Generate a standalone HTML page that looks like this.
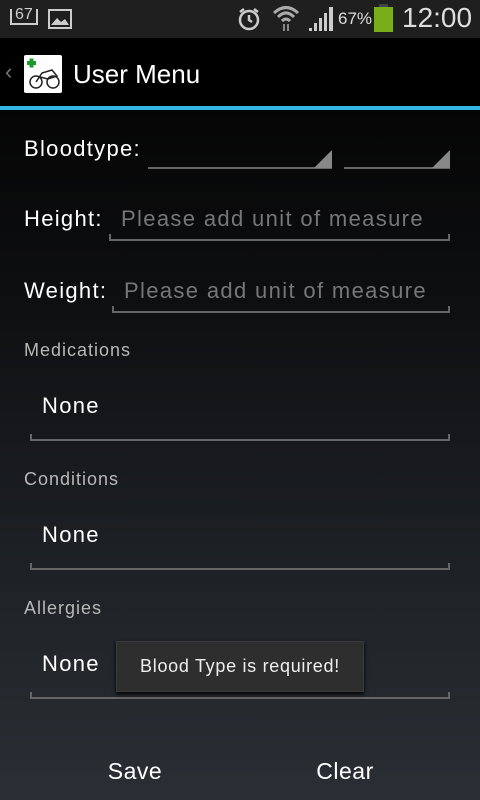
<!DOCTYPE html>
<html><head><style>
*{margin:0;padding:0;box-sizing:border-box}
body{width:480px;height:800px;overflow:hidden;font-family:"Liberation Sans",sans-serif;background:linear-gradient(#050505 110px,#0e0f11 300px,#1d2024 550px,#2b2f35 800px);position:relative;color:#fff}
.a{position:absolute;white-space:nowrap}
.sb{position:absolute;left:0;top:0;width:480px;height:38px;background:#1f1f1f}
.ab{position:absolute;left:0;top:38px;width:480px;height:68px;background:#000}
.bl{position:absolute;left:0;top:106px;width:480px;height:4px;background:#33b5e5}
.lbl{font-size:22px;color:#fff;letter-spacing:1.3px}
.ph{font-size:22px;color:#777;letter-spacing:1.35px}
.sec{font-size:18px;color:#b8b8b8;letter-spacing:1px}
.ln{position:absolute;height:2px;background:#666}
.tk{position:absolute;width:2px;height:6px;background:#666}
.tri{position:absolute;width:0;height:0;border-left:18px solid transparent;border-bottom:18px solid #888}
</style></head><body>
<div class="sb"></div>
<div class="a" style="left:10px;top:9px;font-size:16px;color:#ccc;border:2px solid #ccc;border-top:none;padding:0 3px;height:16px;line-height:12px">67</div>
<div class="a" style="left:48px;top:9px;width:24px;height:20px;border:2px solid #ccc"><svg width="20" height="16"><path d="M1 14 L7 7 L11 11 L15 8 L19 14Z" fill="#ccc"/></svg></div>
<svg class="a" style="left:236px;top:6px" width="26" height="26"><circle cx="13" cy="14" r="9" fill="none" stroke="#ccc" stroke-width="2.5"/><path d="M13 9v5l3 2M4 6l4-3M22 6l-4-3" stroke="#ccc" stroke-width="2.5" fill="none"/></svg>
<svg class="a" style="left:272px;top:4px" width="28" height="28"><path d="M2 9 Q14 -2 26 9" stroke="#aaa" stroke-width="3" fill="none"/><path d="M6 13 Q14 5 22 13" stroke="#aaa" stroke-width="3" fill="none"/><path d="M10 17 Q14 13 18 17" stroke="#aaa" stroke-width="3" fill="none"/><path d="M12 20v7M16 20v7" stroke="#888" stroke-width="2"/></svg>
<svg class="a" style="left:308px;top:6px" width="28" height="26"><path d="M1 25h3v-3h-3zM6 25h3v-8h-3zM11 25h3v-13h-3zM16 25h3v-18h-3zM21 25h4v-24h-4z" fill="#ccc"/></svg>
<div class="a" style="left:338px;top:9px;font-size:17px;color:#ddd">67%</div>
<div class="a" style="left:374px;top:7px;width:19px;height:25px;background:#7aac1b"></div>
<div class="a" style="left:379px;top:4px;width:9px;height:3px;background:#444"></div>
<div class="a" style="left:402px;top:2px;font-size:28px;color:#ddd">12:00</div>
<div class="ab"></div>
<div class="a" style="left:5px;top:59px;font-size:22px;color:#777">‹</div>
<div class="a" style="left:24px;top:55px;width:38px;height:38px;background:#fff;border-radius:2px"><svg width="38" height="38"><path d="M3 8h9M7.5 3.5v9" stroke="#1a9a2a" stroke-width="4"/><circle cx="12" cy="27" r="6" fill="none" stroke="#222" stroke-width="1.5"/><circle cx="29" cy="27" r="6" fill="none" stroke="#222" stroke-width="1.5"/><path d="M12 27 L18 18 L28 15 L33 21 L24 24 L16 22" fill="none" stroke="#222" stroke-width="1.5"/></svg></div>
<div class="a" style="left:73px;top:59px;font-size:26px;color:#fff">User Menu</div>
<div class="bl"></div>

<div class="a lbl" style="left:24px;top:136px">Bloodtype:</div>
<div class="ln" style="left:148px;top:167px;width:184px"></div>
<div class="tri" style="left:314px;top:150px"></div>
<div class="ln" style="left:344px;top:167px;width:106px"></div>
<div class="tri" style="left:432px;top:150px"></div>

<div class="a lbl" style="left:24px;top:206px">Height:</div>
<div class="a ph" style="left:121px;top:206px">Please add unit of measure</div>
<div class="ln" style="left:109px;top:239px;width:341px"></div>
<div class="tk" style="left:109px;top:234px"></div><div class="tk" style="left:448px;top:234px"></div>

<div class="a lbl" style="left:24px;top:278px">Weight:</div>
<div class="a ph" style="left:124px;top:278px">Please add unit of measure</div>
<div class="ln" style="left:112px;top:311px;width:338px"></div>
<div class="tk" style="left:112px;top:306px"></div><div class="tk" style="left:448px;top:306px"></div>

<div class="a sec" style="left:24px;top:340px">Medications</div>
<div class="a lbl" style="left:42px;top:393px">None</div>
<div class="ln" style="left:30px;top:439px;width:420px"></div>
<div class="tk" style="left:30px;top:434px"></div><div class="tk" style="left:448px;top:434px"></div>

<div class="a sec" style="left:24px;top:469px">Conditions</div>
<div class="a lbl" style="left:42px;top:522px">None</div>
<div class="ln" style="left:30px;top:568px;width:420px"></div>
<div class="tk" style="left:30px;top:563px"></div><div class="tk" style="left:448px;top:563px"></div>

<div class="a sec" style="left:24px;top:598px">Allergies</div>
<div class="a lbl" style="left:42px;top:651px">None</div>
<div class="ln" style="left:30px;top:697px;width:420px"></div>
<div class="tk" style="left:30px;top:692px"></div><div class="tk" style="left:448px;top:692px"></div>

<div class="a" style="left:116px;top:641px;width:248px;height:51px;background:#2e2e2e;border:1px solid #3a3a3a;box-shadow:0 2px 4px #000;font-size:18px;color:#eee;text-align:center;line-height:49px;letter-spacing:0.7px">Blood Type is required!</div>

<div class="a" style="left:35px;top:758px;width:200px;text-align:center;font-size:23px;color:#fff;letter-spacing:0.5px">Save</div>
<div class="a" style="left:245px;top:758px;width:200px;text-align:center;font-size:23px;color:#fff;letter-spacing:0.5px">Clear</div>
</body></html>
